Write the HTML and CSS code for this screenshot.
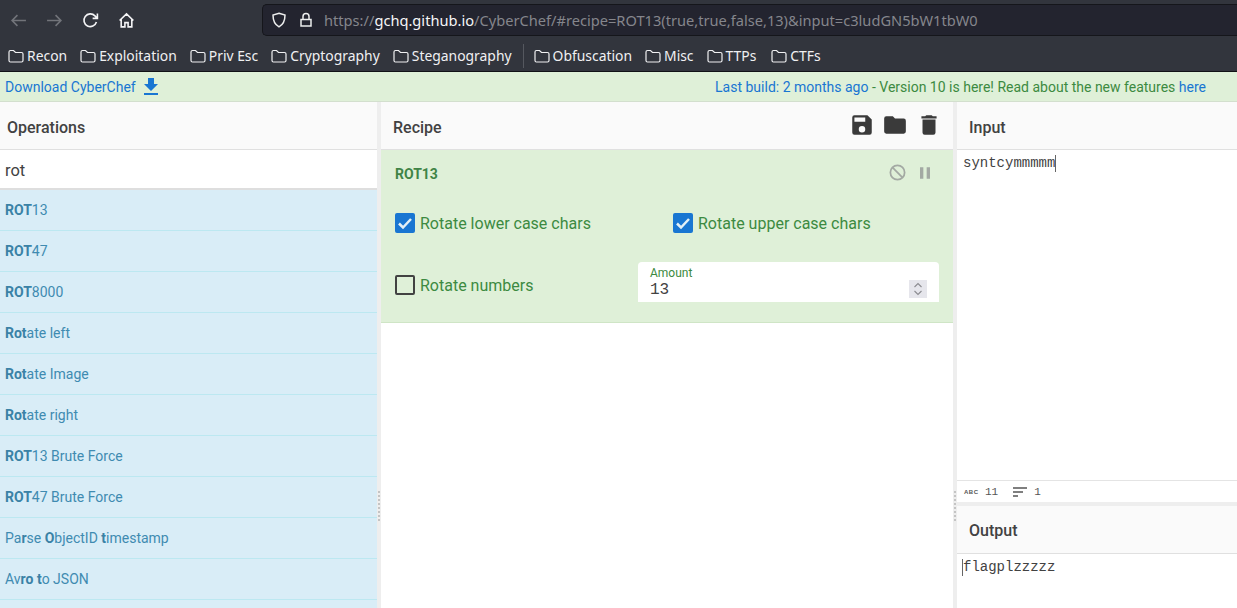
FILE: index.html
```html
<!DOCTYPE html>
<html lang="en">
<head>
<meta charset="utf-8">
<title>CyberChef</title>
<link rel="stylesheet" href="styles.css">
</head>
<body>
<div class="toolbar">
  <div class="nav">
    <svg class="nav-icon dim" viewBox="0 0 16 16"><path d="M15 8H2M7 3 2 8l5 5"/></svg>
    <svg class="nav-icon dim" viewBox="0 0 16 16"><path d="M1 8h13M9 3l5 5-5 5"/></svg>
    <svg class="nav-icon" viewBox="0 0 16 16"><path d="M13.6 9.5A6 6 0 1 1 12.2 3.6L14 5.5M14.5 1.5v4.5H10"/></svg>
    <svg class="nav-icon" viewBox="0 0 16 16"><path d="M1.5 8 8 1.8 14.5 8M3 7v7h3.5v-4h3v4H13V7"/></svg>
  </div>
  <div class="urlbar">
    <svg class="url-icon" viewBox="0 0 16 16"><path d="M8 1.200 14 3c0 6-1.500 9.500-6 11.800C3.500 12.500 2 9 2 3Z"/></svg>
    <svg class="url-icon" viewBox="0 0 16 16"><path d="M3 7.500h10V14H3ZM5 7.500V4.500a3 3 0 0 1 6 0v3"/></svg>
    <span class="url"><span class="url-dim">https://</span>gchq.github.io<span class="url-dim">/CyberChef/#recipe=ROT13(true,true,false,13)&amp;input=c3ludGN5bW1tbW0</span></span>
  </div>
</div>
<div class="bookmarks">
  <span class="bm"><svg class="folder" viewBox="0 0 16 14"><path d="M1 3a1.500 1.500 0 0 1 1.500-1.500h3L7.500 3.500h6A1.500 1.500 0 0 1 15 5v6.500a1.500 1.500 0 0 1-1.500 1.500h-11A1.500 1.500 0 0 1 1 11.500Z"/></svg>Recon</span>
  <span class="bm"><svg class="folder" viewBox="0 0 16 14"><path d="M1 3a1.500 1.500 0 0 1 1.500-1.500h3L7.500 3.500h6A1.500 1.500 0 0 1 15 5v6.500a1.500 1.500 0 0 1-1.500 1.500h-11A1.500 1.500 0 0 1 1 11.500Z"/></svg>Exploitation</span>
  <span class="bm"><svg class="folder" viewBox="0 0 16 14"><path d="M1 3a1.500 1.500 0 0 1 1.500-1.500h3L7.500 3.500h6A1.500 1.500 0 0 1 15 5v6.500a1.500 1.500 0 0 1-1.500 1.500h-11A1.500 1.500 0 0 1 1 11.500Z"/></svg>Priv Esc</span>
  <span class="bm"><svg class="folder" viewBox="0 0 16 14"><path d="M1 3a1.500 1.500 0 0 1 1.500-1.500h3L7.500 3.500h6A1.500 1.500 0 0 1 15 5v6.500a1.500 1.500 0 0 1-1.500 1.500h-11A1.500 1.500 0 0 1 1 11.500Z"/></svg>Cryptography</span>
  <span class="bm"><svg class="folder" viewBox="0 0 16 14"><path d="M1 3a1.500 1.500 0 0 1 1.500-1.500h3L7.500 3.500h6A1.500 1.500 0 0 1 15 5v6.500a1.500 1.500 0 0 1-1.500 1.500h-11A1.500 1.500 0 0 1 1 11.500Z"/></svg>Steganography</span>
  <span class="bm-sep"></span>
  <span class="bm"><svg class="folder" viewBox="0 0 16 14"><path d="M1 3a1.500 1.500 0 0 1 1.500-1.500h3L7.500 3.500h6A1.500 1.500 0 0 1 15 5v6.500a1.500 1.500 0 0 1-1.500 1.500h-11A1.500 1.500 0 0 1 1 11.500Z"/></svg>Obfuscation</span>
  <span class="bm"><svg class="folder" viewBox="0 0 16 14"><path d="M1 3a1.500 1.500 0 0 1 1.500-1.500h3L7.500 3.500h6A1.500 1.500 0 0 1 15 5v6.500a1.500 1.500 0 0 1-1.500 1.500h-11A1.500 1.500 0 0 1 1 11.500Z"/></svg>Misc</span>
  <span class="bm"><svg class="folder" viewBox="0 0 16 14"><path d="M1 3a1.500 1.500 0 0 1 1.500-1.500h3L7.500 3.500h6A1.500 1.500 0 0 1 15 5v6.500a1.500 1.500 0 0 1-1.500 1.500h-11A1.500 1.500 0 0 1 1 11.500Z"/></svg>TTPs</span>
  <span class="bm"><svg class="folder" viewBox="0 0 16 14"><path d="M1 3a1.500 1.500 0 0 1 1.500-1.500h3L7.500 3.500h6A1.500 1.500 0 0 1 15 5v6.500a1.500 1.500 0 0 1-1.500 1.500h-11A1.500 1.500 0 0 1 1 11.500Z"/></svg>CTFs</span>
</div>
<div class="banner">
  <span class="dl">Download CyberChef
    <svg class="dl-icon" viewBox="0 0 24 24"><path d="M19 9h-4V3H9v6H5l7 7zM5 18v2h14v-2z"/></svg>
  </span>
  <span class="notice"><span class="blue">Last build: 2 months ago</span> - Version 10 is here! Read about the new features <span class="blue">here</span></span>
</div>
<div class="app">
  <section class="ops">
    <header class="head">Operations</header>
    <div class="search">rot</div>
    <ul class="oplist">
      <li><b>ROT</b>13</li>
      <li><b>ROT</b>47</li>
      <li><b>ROT</b>8000</li>
      <li><b>Rot</b>ate left</li>
      <li><b>Rot</b>ate Image</li>
      <li><b>Rot</b>ate right</li>
      <li><b>ROT</b>13 Brute Force</li>
      <li><b>ROT</b>47 Brute Force</li>
      <li>Pa<b>r</b>se <b>O</b>bjectID <b>t</b>imestamp</li>
      <li>Av<b>ro</b> <b>t</b>o JSON</li>
    </ul>
  </section>
  <div class="gutter"><span class="grip"></span></div>
  <section class="recipe">
    <header class="head head-recipe">Recipe
      <span class="tools">
        <svg class="tool" viewBox="0 0 24 24"><path d="M17 3H5a2 2 0 0 0-2 2v14a2 2 0 0 0 2 2h14a2 2 0 0 0 2-2V7zm-5 16a3 3 0 1 1 0-6 3 3 0 0 1 0 6zm3-10H5V5h10z"/></svg>
        <svg class="tool" viewBox="0 0 24 24"><path d="M10 4H4a2 2 0 0 0-2 2v12a2 2 0 0 0 2 2h16a2 2 0 0 0 2-2V8a2 2 0 0 0-2-2h-8z"/></svg>
        <svg class="tool" viewBox="0 0 24 24"><path d="M6 19a2 2 0 0 0 2 2h8a2 2 0 0 0 2-2V7H6zM19 4h-3.500l-1-1h-5l-1 1H5v2h14z"/></svg>
      </span>
    </header>
    <div class="op">
      <div class="op-title">ROT13
        <span class="op-ctl">
          <svg class="ctl ctl-ban" viewBox="0 0 24 24"><circle cx="12" cy="12" r="9"/><path d="M5.600 5.600 18.400 18.400"/></svg>
          <svg class="ctl" viewBox="0 0 24 24"><path d="M6 19h4V5H6zm8-14v14h4V5z"/></svg>
        </span>
      </div>
      <div class="op-args">
        <label class="check"><span class="box on"><svg viewBox="0 0 20 20"><path d="M4 10.500l4 4L16 6"/></svg></span>Rotate lower case chars</label>
        <label class="check"><span class="box on"><svg viewBox="0 0 20 20"><path d="M4 10.500l4 4L16 6"/></svg></span>Rotate upper case chars</label>
        <label class="check"><span class="box"></span>Rotate numbers</label>
        <div class="amount">
          <span class="amount-label">Amount</span>
          <span class="amount-value">13</span>
          <span class="spin"><svg viewBox="0 0 18 18"><path d="M5.500 7 9 3.500 12.500 7M5.500 11 9 14.500 12.500 11"/></svg></span>
        </div>
      </div>
    </div>
  </section>
  <div class="gutter"><span class="grip"></span></div>
  <section class="io">
    <header class="head">Input</header>
    <div class="io-text input-text"><span class="caret-after">syntcymmmmm</span></div>
    <div class="status">
      <span class="abc">ABC</span><span>11</span>
      <svg class="lines" viewBox="0 0 14 10"><path d="M0 1h14M0 5h10M0 9h5"/></svg><span>1</span>
    </div>
    <div class="hgutter"></div>
    <header class="head head-output">Output</header>
    <div class="io-text output-text"><span class="caret-before">flagplzzzzz</span></div>
  </section>
</div>
</body>
</html>
```

FILE: styles.css
```css
* { box-sizing: border-box; }
html, body { height: 100%; }
body {
  margin: 0;
  width: 1237px;
  height: 608px;
  overflow: hidden;
  display: flex;
  flex-direction: column;
  font-family: Roboto, "Liberation Sans", sans-serif;
  background: #fff;
}
.toolbar {
  height: 36px;
  flex: none;
  display: flex;
  background: #32353d;
  padding: 4px 0 0 9px;
}
.nav { width: 253px; display: flex; align-items: center; gap: 18px; padding-top: 1px; }
.nav-icon { width: 17px; height: 17px; fill: none; stroke: #f4f4f6; stroke-width: 1.500; margin-left: 1px; }
.nav-icon.dim { stroke: #72747a; }
.urlbar {
  flex: 1;
  display: flex;
  align-items: center;
  gap: 11px;
  height: 32px;
  padding-left: 8px;
  background: #23242f;
  border: 1px solid #15161b;
  border-right: 0;
  border-radius: 5px 0 0 5px;
}
.url-icon { width: 16px; height: 16px; fill: none; stroke: #eceded; stroke-width: 1.500; }
.url { font: 14.640px "Noto Sans", sans-serif; color: #f6f6f7; white-space: nowrap; margin-left: -1px; }
.url-dim { color: #85868c; }
.bookmarks {
  height: 36px;
  flex: none;
  display: flex;
  align-items: center;
  padding: 4px 0 0 8px;
  gap: 13px;
  background: #32353d;
  border-bottom: 1px solid #111216;
  font: 13.900px "Noto Sans", sans-serif;
  color: #f0f0f2;
}
.bm { display: inline-flex; align-items: center; gap: 3px; white-space: nowrap; }
.bm:last-child { margin-left: 2px; }
.folder { width: 16px; height: 14px; fill: none; stroke: #f0f0f2; stroke-width: 1.200; }
.bm-sep { width: 1px; height: 24px; background: #55585f; margin: 0 -3px 0 -2px; }
.banner {
  height: 30px;
  flex: none;
  display: flex;
  align-items: center;
  justify-content: space-between;
  padding: 0 31px 0 5px;
  background: #dff0d8;
  border-bottom: 1px solid #d3dfce;
  font-size: 14px;
  color: #3c8a41;
}
.dl { display: inline-flex; align-items: center; gap: 3px; color: #1976d2; }
.dl-icon { width: 24px; height: 24px; fill: #1976d2; }
.blue { color: #1976d2; }
.app { flex: 1; display: flex; min-height: 0; }
.gutter {
  width: 4px;
  flex: none;
  background: #eeeeee;
  display: flex;
  align-items: center;
  justify-content: center;
}
.grip {
  width: 2px;
  height: 30px;
  margin-top: 302px;
  background: repeating-linear-gradient(#c4c4c4 0 2px, transparent 2px 4px);
}
.ops { width: 377px; flex: none; display: flex; flex-direction: column; }
.recipe { width: 572px; flex: none; display: flex; flex-direction: column; }
.io { flex: 1; display: flex; flex-direction: column; min-width: 0; }
.head {
  height: 48px;
  flex: none;
  display: flex;
  align-items: center;
  padding-left: 7px;
  padding-top: 4px;
  background: #fafafa;
  border-bottom: 1px solid #e0e0e0;
  font-size: 16px;
  font-weight: 500;
  color: #424242;
}
.io .head { padding-left: 12px; }
.io .head-output { padding-top: 2px; }
.recipe .head { padding-left: 12px; justify-content: space-between; }
.tools { display: flex; gap: 7px; padding-right: 12px; margin-top: -6px; }
.tool { width: 26px; height: 26px; fill: #3a3a3a; }
.tool:last-child { margin: 0 -1px 0 1px; }
.search {
  height: 40px;
  flex: none;
  display: flex;
  align-items: center;
  padding: 2px 0 0 5px;
  font-size: 16.500px;
  color: #424242;
  border-bottom: 2px solid #dedede;
}
.oplist { list-style: none; margin: 0; padding: 0; flex: 1; background: #d9edf7; overflow: hidden; }
.oplist li {
  height: 41px;
  line-height: 40px;
  white-space: pre;
  padding-left: 5px;
  font-size: 14px;
  color: #3f8bb1;
  border-bottom: 1px solid #bce8f1;
}
.oplist b { font-weight: 700; color: #3a82a6; }
.op {
  height: 173px;
  background: #dff0d8;
  border-bottom: 1px solid #cfe5c6;
  color: #3c8a41;
  padding: 0 14px;
}
.op-title {
  height: 47px;
  display: flex;
  align-items: center;
  justify-content: space-between;
  font-size: 14px;
  font-weight: 700;
  color: #3f8446;
}
.op-ctl { display: flex; gap: 8px; padding-right: 4px; margin-top: -1px; }
.ctl { width: 20px; height: 20px; fill: #a3a9a3; }
.ctl-ban { width: 19px; height: 19px; fill: none; stroke: #a3a9a3; stroke-width: 2.200; }
.op-args {
  display: grid;
  grid-template-columns: 278px 1fr;
  grid-template-rows: 52px 72px;
  font-size: 16px;
  align-items: center;
}
.check { display: flex; align-items: center; gap: 5px; white-space: nowrap; }
.box {
  width: 20px;
  height: 20px;
  border: 2px solid #424242;
  border-radius: 2px;
}
.box.on { background: #1976d2; border: 0; }
.box svg { display: block; width: 20px; height: 20px; fill: none; stroke: #e4f0f6; stroke-width: 2.500; }
.amount {
  position: relative;
  height: 40px;
  margin: -6px 0 0 -35px;
  background: #fff;
  border-radius: 4px 4px 0 0;
  padding: 5px 12px 0;
  display: flex;
  flex-direction: column;
}
.amount-label { font-size: 12px; line-height: 12px; color: #3c8a41; }
.amount-value { font: 16px/17px "Liberation Mono", monospace; color: #424242; margin-top: 3px; }
.spin {
  position: absolute;
  right: 12px;
  top: 18px;
  width: 18px;
  height: 18px;
  background: #e6e6ec;
}
.spin svg { display: block; width: 18px; height: 18px; fill: none; stroke: #8b8b90; stroke-width: 1.100; }
.io-text {
  font: 14px/16px "Liberation Mono", monospace;
  color: #424242;
  padding: 5px 6px 0;
}
.input-text { height: 331px; flex: none; border-bottom: 1px solid #e4e4e4; }
.caret-after { border-right: 1px solid #666; display: inline-block; height: 17px; }
.caret-before { border-left: 1px solid #666; display: inline-block; height: 17px; margin-left: -1px; }
.status {
  height: 21px;
  flex: none;
  display: flex;
  align-items: center;
  padding-left: 7px;
  background: #fff;
  font: 11px "Liberation Mono", monospace;
  color: #555;
}
.abc { font: bold 6px "Liberation Sans", sans-serif; width: 21px; letter-spacing: 0.500px; }
.lines { width: 14px; height: 10px; margin: 1px 7px 0 15px; stroke: #555; stroke-width: 1.300; fill: none; }
.hgutter { height: 4px; flex: none; background: #eeeeee; }
.output-text { flex: 1; }
```
